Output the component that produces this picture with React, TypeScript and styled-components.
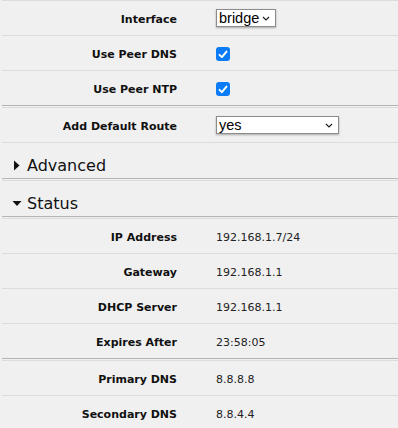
import React, { FC } from "react";
import styled, { createGlobalStyle } from "styled-components";

const GlobalStyle = createGlobalStyle`
  html, body {
    margin: 0;
    padding: 0;
    background: #f0f0f0;
  }
  body {
    font-family: "DejaVu Sans", Verdana, sans-serif;
    color: #111;
  }
`;

const Page = styled.div`
  margin-left: 2px;
  border-top: 1px solid #dcdcdc;
  background: #f0f0f0;
  height: 427px;
  overflow: hidden;
`;

const Row = styled.div<{ $last?: boolean }>`
  display: grid;
  grid-template-columns: 175px 1fr;
  column-gap: 39px;
  align-items: center;
  height: 34px;
  border-bottom: ${(p) => (p.$last ? "none" : "1px solid #dcdcdc")};
`;

const Label = styled.div`
  text-align: right;
  font-size: 11px;
  font-weight: bold;
  color: #111;
  padding-top: 2px;
`;

const Value = styled.div`
  font-size: 11px;
  color: #222;
  padding-top: 2px;
`;

const Separator = styled.div`
  height: 1px;
  border-top: 1px solid #b4b4b4;
  border-bottom: 1px solid #dcdcdc;
`;

const Header = styled.div`
  display: flex;
  align-items: center;
  gap: 3px;
  height: 35px;
  padding-left: 10px;
  padding-top: 9px;
  box-sizing: border-box;
  font-size: 16px;
  color: #111;
`;

const Arrow = styled.svg`
  width: 12px;
  height: 12px;
  flex: none;
`;

const SelectBox = styled.div<{ $width: number }>`
  box-sizing: border-box;
  width: ${(p) => p.$width}px;
  height: 18px;
  display: flex;
  align-items: center;
  justify-content: space-between;
  padding: 0 5px 0 2px;
  background: #fff;
  border: 1px solid #8c8c8c;
  box-shadow: 0 1px 2px rgba(0, 0, 0, 0.3);
  font-family: "Liberation Sans", Arial, sans-serif;
  font-size: 14.5px;
  color: #000;
`;

const CheckBox = styled.span`
  display: inline-flex;
  align-items: center;
  justify-content: center;
  width: 14px;
  height: 14px;
  margin-top: 2px;
  border-radius: 3px;
  background: #0b7bf7;
`;

const Chevron: FC = () => (
  <svg width="8" height="5" viewBox="0 0 8 5">
    <path d="M1 1 L4 4 L7 1" fill="none" stroke="#222" strokeWidth="1.2" />
  </svg>
);

const Check: FC = () => (
  <CheckBox>
    <svg width="10" height="9" viewBox="0 0 10 9">
      <path
        d="M1.5 4.8 L3.9 7.2 L8.5 1.6"
        fill="none"
        stroke="#fff"
        strokeWidth="1.9"
        strokeLinecap="round"
        strokeLinejoin="round"
      />
    </svg>
  </CheckBox>
);

const Select: FC<{ value: string; width: number }> = ({ value, width }) => (
  <SelectBox $width={width}>
    <span>{value}</span>
    <Chevron />
  </SelectBox>
);

const Section: FC<{ title: string; open?: boolean }> = ({ title, open }) => (
  <Header>
    <Arrow viewBox="0 0 12 12">
      {open ? (
        <polygon points="0.5,4 9.5,4 5,9" fill="#111" />
      ) : (
        <polygon points="2,1.5 7.5,6.5 2,11.5" fill="#111" />
      )}
    </Arrow>
    <span>{title}</span>
  </Header>
);

const status: [string, string][] = [
  ["IP Address", "192.168.1.7/24"],
  ["Gateway", "192.168.1.1"],
  ["DHCP Server", "192.168.1.1"],
  ["Expires After", "23:58:05"],
];

export default function App() {
  return (
    <>
      <GlobalStyle />
      <Page>
        <Row>
          <Label>Interface</Label>
          <div>
            <Select value="bridge" width={60} />
          </div>
        </Row>
        <Row>
          <Label>Use Peer DNS</Label>
          <div>
            <Check />
          </div>
        </Row>
        <Row $last>
          <Label>Use Peer NTP</Label>
          <div>
            <Check />
          </div>
        </Row>
        <Separator />
        <Row>
          <Label>Add Default Route</Label>
          <div>
            <Select value="yes" width={123} />
          </div>
        </Row>
        <Section title="Advanced" />
        <Separator />
        <Section title="Status" open />
        <Separator />
        {status.map(([label, value], i) => (
          <Row key={label} $last={i === status.length - 1}>
            <Label>{label}</Label>
            <Value>{value}</Value>
          </Row>
        ))}
        <Separator />
        <Row>
          <Label>Primary DNS</Label>
          <Value>8.8.8.8</Value>
        </Row>
        <Row $last>
          <Label>Secondary DNS</Label>
          <Value>8.8.4.4</Value>
        </Row>
      </Page>
    </>
  );
}
